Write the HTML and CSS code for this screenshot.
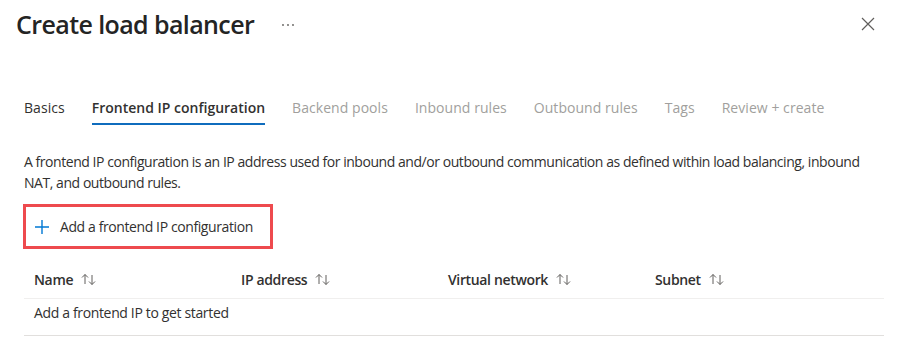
FILE: index.html
```html
<!DOCTYPE html>
<html lang="en">
<head>
    <meta charset="UTF-8">
    <meta name="viewport" content="width=device-width, initial-scale=1.0">
    <title>Create load balancer</title>
    <link rel="stylesheet" href="styles.css">
</head>
<body>
    <div class="blade">
        <div class="blade-header">
            <h1>Create load balancer</h1>
            <span class="more">
                <svg width="14" height="4" viewBox="0 0 14 4"><circle cx="2" cy="2" r="0.9"/><circle cx="7" cy="2" r="0.9"/><circle cx="12" cy="2" r="0.9"/></svg>
            </span>
            <button class="close" aria-label="Close">
                <svg width="14" height="14" viewBox="0 0 14 14"><path d="M1 1L13 13M13 1L1 13"/></svg>
            </button>
        </div>

        <div class="tabs">
            <div class="tab done">Basics</div>
            <div class="tab active">Frontend IP configuration</div>
            <div class="tab">Backend pools</div>
            <div class="tab">Inbound rules</div>
            <div class="tab">Outbound rules</div>
            <div class="tab">Tags</div>
            <div class="tab">Review + create</div>
        </div>

        <p class="intro">
            A frontend IP configuration is an IP address used for inbound and/or outbound communication as defined within load balancing, inbound NAT, and outbound rules.
        </p>

        <div class="add-wrap">
            <button class="add-button">
                <svg width="16" height="16" viewBox="0 0 16 16"><path d="M8 1V15M1 8H15"/></svg>
                <span>Add a frontend IP configuration</span>
            </button>
        </div>

        <div class="grid">
            <div class="grid-head">
                <div class="cell">Name <svg class="sort" width="15" height="13" viewBox="0 0 15 13"><path d="M4 11V1.5M1 4.5L4 1.5L7 4.5M11 2V11.5M8 8.5L11 11.5L14 8.5"/></svg></div>
                <div class="cell">IP address <svg class="sort" width="15" height="13" viewBox="0 0 15 13"><path d="M4 11V1.5M1 4.5L4 1.5L7 4.5M11 2V11.5M8 8.5L11 11.5L14 8.5"/></svg></div>
                <div class="cell">Virtual network <svg class="sort" width="15" height="13" viewBox="0 0 15 13"><path d="M4 11V1.5M1 4.5L4 1.5L7 4.5M11 2V11.5M8 8.5L11 11.5L14 8.5"/></svg></div>
                <div class="cell">Subnet <svg class="sort" width="15" height="13" viewBox="0 0 15 13"><path d="M4 11V1.5M1 4.5L4 1.5L7 4.5M11 2V11.5M8 8.5L11 11.5L14 8.5"/></svg></div>
            </div>
            <div class="grid-row empty">Add a frontend IP to get started</div>
        </div>
    </div>
</body>
</html>
```

FILE: styles.css
```css
* {
    margin: 0;
    padding: 0;
    box-sizing: border-box;
    font-family: 'Open Sans', 'Noto Sans', sans-serif;
}

body {
    background: #ffffff;
    color: #323130;
    width: 900px;
    height: 359px;
    overflow: hidden;
}

.blade {
    padding: 0 16px 0 24px;
}

.blade-header {
    display: flex;
    align-items: center;
    height: 36px;
    margin-top: 6px;
    margin-left: -8px;
}

h1 {
    font-size: 25px;
    font-weight: 600;
    color: #242424;
    line-height: 36px;
    letter-spacing: -0.6px;
}

.more {
    display: flex;
    margin-left: 27px;
    margin-top: 2px;
}

.more svg circle {
    fill: #605e5c;
}

.close {
    margin-left: auto;
    margin-right: 9px;
    background: none;
    border: none;
    display: flex;
    cursor: pointer;
}

.close svg path {
    stroke: #605e5c;
    stroke-width: 1.2;
    fill: none;
}

.tabs {
    display: flex;
    gap: 27px;
    margin-top: 56px;
    font-size: 14px;
}

.tab {
    color: #a19f9d;
    line-height: 20px;
    padding-bottom: 5px;
    border-bottom: 2px solid transparent;
    letter-spacing: 0.05px;
    white-space: nowrap;
}

.tab.done {
    color: #323130;
}

.tab.active {
    color: #323130;
    font-weight: 600;
    letter-spacing: 0;
    border-bottom-color: #0f6cbd;
}

.intro {
    margin-top: 26px;
    font-size: 14px;
    line-height: 21px;
    letter-spacing: -0.45px;
}

.add-wrap {
    margin-top: 11px;
    margin-left: -1px;
}

.add-button {
    display: flex;
    align-items: center;
    gap: 10px;
    width: 250px;
    height: 45px;
    padding-left: 8px;
    background: #ffffff;
    border: 3px solid #ee4a4e;
    color: #323130;
    font-size: 14px;
    letter-spacing: -0.4px;
    cursor: pointer;
}

.add-button svg path {
    stroke: #0078d4;
    stroke-width: 1.4;
    fill: none;
}

.grid {
    margin-top: 12px;
    width: 860px;
    font-size: 14px;
    letter-spacing: -0.35px;
}

.grid-head {
    display: grid;
    grid-template-columns: 207px 207px 207px 1fr;
    height: 38px;
    border-bottom: 1px solid #f0efee;
}

.cell {
    display: flex;
    align-items: center;
    gap: 8px;
    padding-left: 10px;
    font-weight: 600;
    color: #323130;
}

.sort path {
    stroke: #605e5c;
    stroke-width: 1;
    fill: none;
}

.grid-row {
    height: 37px;
    padding: 4px 10px 0;
    line-height: 20px;
    border-bottom: 1px solid #e1dfdd;
}
```
